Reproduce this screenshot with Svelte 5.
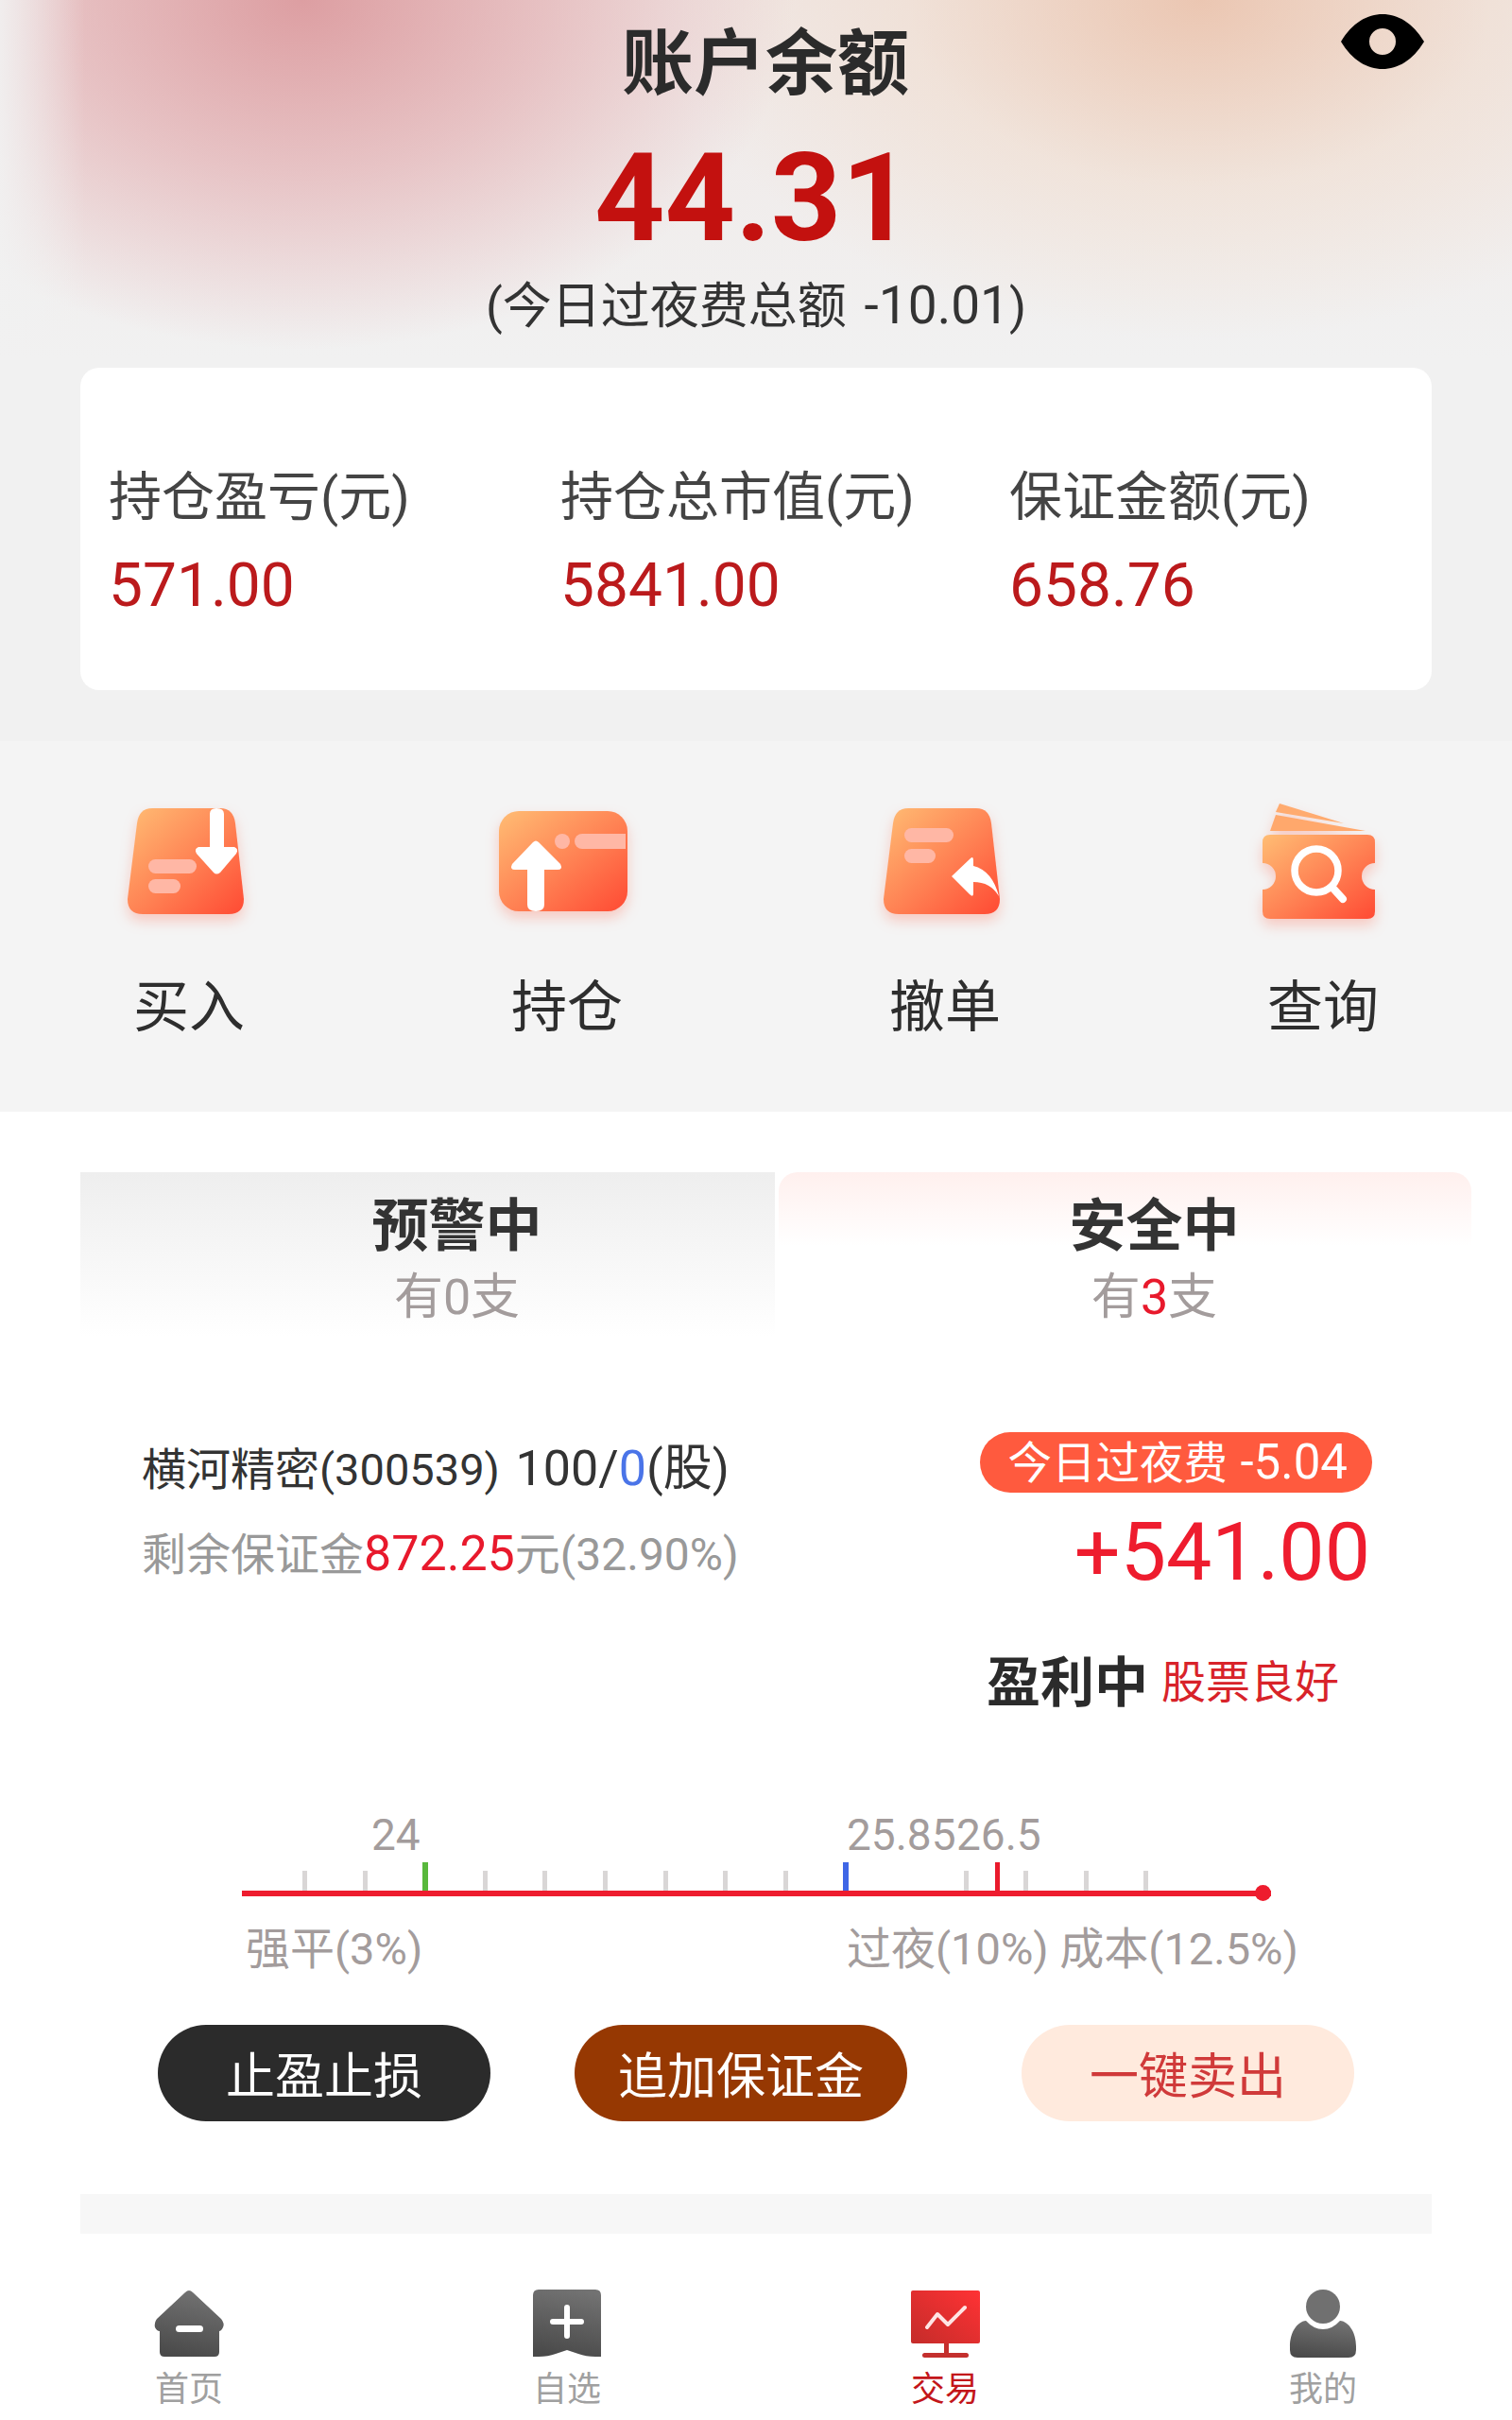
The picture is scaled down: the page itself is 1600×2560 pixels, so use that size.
<script>
  const ticks = Array.from({ length: 15 }, (_, i) => 64 + i * 63.6).filter((_, i) => i !== 2 && i !== 10);
  const marks = [
    { left: 191, cls: 'green' },
    { left: 636, cls: 'blue' },
    { left: 797, cls: 'red' },
  ];
  const stats = [
    { label: '持仓盈亏(元)', value: '571.00' },
    { label: '持仓总市值(元)', value: '5841.00' },
    { label: '保证金额(元)', value: '658.76' },
  ];
</script>

<div class="page">
  <header class="head">
    <svg class="eye" viewBox="0 0 88 58" width="88" height="58">
      <path fill-rule="evenodd" fill="#000" d="M0 29C12 9 28 0 44 0s32 9 44 29C76 49 60 58 44 58S12 49 0 29ZM44 15a14 14 0 1 0 0 28a14 14 0 1 0 0-28Z" />
    </svg>
    <div class="title">账户余额</div>
    <div class="amount">44.31</div>
    <div class="sub">(今日过夜费总额 <span>-10.01</span>)</div>
    <div class="card">
      {#each stats as s}
        <div>
          <div class="stat-label">{s.label}</div>
          <div class="stat-value">{s.value}</div>
        </div>
      {/each}
    </div>
  </header>

  <section class="actions">
    <svg width="0" height="0" class="defs">
      <defs>
        <linearGradient id="org" x1="0" y1="0" x2="1" y2="1">
          <stop offset="0" stop-color="#ffbd74" />
          <stop offset="0.55" stop-color="#ff7f52" />
          <stop offset="1" stop-color="#ff4a33" />
        </linearGradient>
        <linearGradient id="gray" x1="0.6" y1="0" x2="0.4" y2="1">
          <stop offset="0" stop-color="#727272" />
          <stop offset="1" stop-color="#4a4a4a" />
        </linearGradient>
        <linearGradient id="redg" x1="1" y1="0" x2="0" y2="1">
          <stop offset="0" stop-color="#ff3234" />
          <stop offset="1" stop-color="#c42c2a" />
        </linearGradient>
      </defs>
    </svg>
    <div class="action">
      <svg class="aicon" viewBox="0 0 160 150" width="160" height="150">
        <path fill="url(#org)" d="M41 10H113Q127 10 129 26L138 106Q138 122 122 122H31Q15 122 15 106L25 26Q27 10 41 10Z" />
        <rect x="37" y="64" width="51" height="15" rx="7.5" fill="#ffb7a5" />
        <rect x="37" y="85" width="34" height="15" rx="7.5" fill="#ffb7a5" />
        <path fill="#fff" d="M102 16Q102 10 109 10Q117 10 117 16V51H128Q133 53 130 58L113 78Q109 81 106 78L88 58Q85 53 90 51H102Z" />
      </svg>
      <span>买入</span>
    </div>
    <div class="action">
      <svg class="aicon" viewBox="0 0 160 150" width="160" height="150">
        <rect x="8" y="13" width="136" height="106" rx="21" fill="url(#org)" />
        <circle cx="75" cy="45" r="8" fill="#ffb7a5" />
        <path fill="#ffb7a5" d="M96 37H142V53H96a8 8 0 0 1 0-16Z" />
        <path fill="#fff" d="M44 46Q47 43 50 46L73 69Q76 75 70 75H56V112Q56 119 47 119Q38 119 38 112V75H25Q19 75 22 69Z" />
      </svg>
      <span>持仓</span>
    </div>
    <div class="action">
      <svg class="aicon" viewBox="0 0 160 150" width="160" height="150">
        <path fill="url(#org)" d="M41 10H113Q127 10 129 26L138 106Q138 122 122 122H31Q15 122 15 106L25 26Q27 10 41 10Z" />
        <rect x="37" y="31" width="52" height="15" rx="7.5" fill="#ffb7a5" />
        <rect x="37" y="53" width="33" height="15" rx="7.5" fill="#ffb7a5" />
        <path fill="#fff" d="M87 82L107 63Q110 60 110 65V71Q130 76 137 103Q128 88 110 88V100Q110 105 106 101Z" />
      </svg>
      <span>撤单</span>
    </div>
    <div class="action">
      <svg class="aicon" viewBox="0 0 160 150" width="160" height="150">
        <path fill="#ffab6f" d="M34 5L102 26L30 14Z" />
        <path fill="#ffa86c" d="M30 17L125 34H24Z" />
        <path fill="url(#org)" fill-rule="evenodd" d="M24 38H127Q135 38 135 46V68A14 14 0 0 0 135 96V119Q135 127 127 127H24Q16 127 16 119V96A14 14 0 0 0 16 68V46Q16 38 24 38Z" />
        <circle cx="73" cy="76" r="23" fill="none" stroke="#fff" stroke-width="7.5" />
        <path d="M91 95L101 106" stroke="#fff" stroke-width="8" stroke-linecap="round" />
      </svg>
      <span>查询</span>
    </div>
  </section>

  <main class="main">
    <div class="tabs">
      <div class="tab warn">
        <div class="tab-title">预警中</div>
        <div class="tab-sub">有0支</div>
      </div>
      <div class="tab safe">
        <div class="tab-title">安全中</div>
        <div class="tab-sub">有<em>3</em>支</div>
      </div>
    </div>

    <div class="pos">
      <div>
        <div class="pos-name">横河精密(300539) <span>100/<b>0</b>(股)</span></div>
        <div class="pos-margin">剩余保证金<em>872.25</em><span>元(32.90%)</span></div>
      </div>
      <div class="pos-right">
        <div class="pill">今日过夜费 <span>-5.04</span></div>
        <div class="profit">+541.00</div>
      </div>
    </div>

    <div class="status">
      <strong>盈利中</strong>
      <span>股票良好</span>
    </div>

    <div class="scale">
      <span class="val" style="left: 137px">24</span>
      <span class="val" style="left: 640px">25.85</span>
      <span class="val" style="left: 756px">26.5</span>
      {#each ticks as t}
        <i class="tick" style="left: {t}px"></i>
      {/each}
      {#each marks as m}
        <i class="mark {m.cls}" style="left: {m.left}px"></i>
      {/each}
      <div class="line"></div>
      <div class="dot"></div>
    </div>

    <div class="scale-labels">
      <span>强平(3%)</span>
      <span>过夜(10%) 成本(12.5%)</span>
    </div>

    <div class="btns">
      <button class="btn dark">止盈止损</button>
      <button class="btn brown">追加保证金</button>
      <button class="btn light">一键卖出</button>
    </div>

    <div class="bar"></div>
  </main>

  <nav class="nav">
    <div class="nav-item">
      <svg viewBox="0 0 80 76" width="80" height="76">
        <path fill="url(#gray)" d="M36 5Q40 1 44 5L74 33Q78 38 76 42Q74 46 72 46V68Q72 73 67 73H14Q9 73 9 68V46Q6 46 4 42Q3 37 6 33Z" />
        <rect x="26" y="40" width="29" height="7" rx="3.5" fill="#fff" />
      </svg>
      <span>首页</span>
    </div>
    <div class="nav-item">
      <svg viewBox="0 0 80 76" width="80" height="76">
        <path fill="url(#gray)" d="M10 2H70Q76 2 76 8V73H70Q60 73 52 70L40 66L28 70Q20 73 10 73H4V8Q4 2 10 2Z" />
        <path d="M25 36H55M40 21V51" stroke="#fff" stroke-width="6" stroke-linecap="round" />
      </svg>
      <span>自选</span>
    </div>
    <div class="nav-item on">
      <svg viewBox="0 0 80 76" width="80" height="76">
        <rect x="4" y="3" width="73" height="56" rx="2" fill="url(#redg)" />
        <rect x="39" y="59" width="5" height="11" fill="#c4302e" />
        <rect x="16" y="69" width="49" height="5" rx="2.5" fill="#c4302e" />
        <path d="M21 42L32 28L43 39L61 21" fill="none" stroke="#ffe4e4" stroke-width="4" stroke-linecap="round" stroke-linejoin="round" />
      </svg>
      <span>交易</span>
    </div>
    <div class="nav-item">
      <svg viewBox="0 0 80 76" width="80" height="76">
        <ellipse cx="40" cy="20" rx="18" ry="18" fill="#707070" />
        <path fill="url(#gray)" d="M5 62C5 48 12 36 22 35Q30 44 40 44Q50 44 58 35C68 36 75 48 75 62V66Q75 74 67 74H13Q5 74 5 66Z" />
      </svg>
      <span>我的</span>
    </div>
  </nav>
</div>

<style>
  :global(body) {
    margin: 0;
    background: #fff;
  }

  .page {
    width: 1600px;
    height: 2560px;
    overflow: hidden;
    font-family: Roboto, "Noto Sans CJK SC", sans-serif;
    color: #333;
  }

  .defs {
    position: absolute;
  }

  .head {
    position: relative;
    height: 784px;
    box-sizing: border-box;
    padding-top: 26px;
    text-align: center;
    background:
      linear-gradient(90deg, rgba(241, 241, 241, 0.9) 0, rgba(241, 241, 241, 0) 90px),
      radial-gradient(ellipse 520px 370px at 320px 0, rgba(216, 140, 145, 0.8) 0%, rgba(222, 155, 160, 0.5) 50%, rgba(228, 180, 185, 0) 100%),
      radial-gradient(ellipse 560px 360px at 1270px 0, rgba(234, 190, 165, 0.8) 0%, rgba(240, 215, 195, 0.4) 55%, rgba(240, 225, 205, 0) 100%),
      linear-gradient(#f0e8e6 0, #f1f1f1 380px);
  }

  .eye {
    position: absolute;
    top: 15px;
    left: 1419px;
  }

  .title {
    font-size: 76px;
    line-height: 84px;
    font-weight: 700;
    padding-left: 20px;
    color: #2b2b2b;
  }

  .amount {
    margin-top: 35px;
    font-size: 130px;
    line-height: 130px;
    font-weight: 700;
    color: #c3110f;
    padding-right: 6px;
  }

  .sub {
    margin-top: 13px;
    height: 70px;
    font-size: 52px;
    line-height: 70px;
    color: #333;
  }

  .sub span {
    margin-left: 6px;
    font-size: 55px;
  }

  .card {
    margin: 31px 85px 0;
    height: 341px;
    box-sizing: border-box;
    padding: 102px 0 0 30px;
    background: #fff;
    border-radius: 20px;
    display: grid;
    grid-template-columns: 478px 475px 1fr;
    text-align: left;
  }

  .stat-label {
    font-size: 56px;
    line-height: 70px;
    color: #444;
  }

  .stat-value {
    margin-top: 24px;
    font-size: 64px;
    line-height: 70px;
    color: #bb1a1c;
  }

  .actions {
    height: 392px;
    box-sizing: border-box;
    padding-top: 61px;
    background: #f4f4f4;
    display: grid;
    grid-template-columns: repeat(4, 400px);
  }

  .action {
    display: flex;
    flex-direction: column;
    align-items: center;
  }

  .aicon {
    filter: drop-shadow(0 7px 7px rgba(255, 90, 60, 0.28));
  }

  .action span {
    margin-top: 36px;
    font-size: 59px;
    line-height: 70px;
    color: #2e2e2e;
  }

  .main {
    background: #fff;
  }

  .tabs {
    padding: 64px 43px 0 85px;
    display: grid;
    grid-template-columns: 735px 733px;
    gap: 4px;
  }

  .tab {
    height: 174px;
    box-sizing: border-box;
    padding: 23px 0 0 62px;
    text-align: center;
  }

  .warn {
    background: linear-gradient(#eeeeee, #ffffff);
  }

  .safe {
    background: linear-gradient(#fff0ee, #ffffff 45%);
    border-radius: 20px 20px 0 0;
  }

  .tab-title {
    font-size: 60px;
    line-height: 70px;
    font-weight: 700;
    color: #333;
  }

  .tab-sub {
    margin-top: 10px;
    font-size: 52px;
    line-height: 60px;
    color: #a39c9c;
  }

  .tab-sub em {
    font-style: normal;
    color: #e8192c;
  }

  .pos {
    margin-top: 101px;
    padding: 0 148px 0 150px;
    display: flex;
    justify-content: space-between;
  }

  .pos-name {
    padding-top: 1px;
    height: 76px;
    font-size: 47px;
    line-height: 76px;
    color: #333;
  }

  .pos-name span {
    margin-left: 5px;
    font-size: 52px;
  }

  .pos-name b {
    font-weight: 400;
    color: #4a74e8;
  }

  .pos-margin {
    margin-top: 17px;
    height: 70px;
    font-size: 47px;
    line-height: 70px;
    color: #999;
  }

  .pos-margin em {
    font-style: normal;
    font-size: 52px;
    color: #e8192c;
  }

  .pos-margin span {
    font-size: 48px;
  }

  .pos-right {
    display: flex;
    flex-direction: column;
    align-items: flex-end;
  }

  .pill {
    height: 64px;
    line-height: 64px;
    padding: 0 26px 0 29px;
    border-radius: 32px;
    background: #ff5a3e;
    color: #fff;
    font-size: 46.5px;
  }

  .pill span {
    margin-left: 2px;
    font-size: 51px;
  }

  .profit {
    margin: 13px 2px 0 0;
    font-size: 86px;
    line-height: 100px;
    color: #ee1c2e;
  }

  .status {
    margin-top: 48px;
    padding-right: 183px;
    display: flex;
    justify-content: flex-end;
    align-items: center;
    gap: 14px;
    height: 70px;
  }

  .status strong {
    font-size: 57px;
    color: #2b2b2b;
  }

  .status span {
    font-size: 47px;
    color: #d8232a;
  }

  .scale {
    position: relative;
    margin: 90px 0 0 256px;
    width: 1089px;
    height: 127px;
  }

  .val {
    position: absolute;
    top: 6px;
    font-size: 46px;
    line-height: 70px;
    color: #a39c9c;
  }

  .tick {
    position: absolute;
    top: 79px;
    width: 5px;
    height: 21px;
    background: #d9d6d6;
  }

  .mark {
    position: absolute;
    top: 70px;
    width: 6px;
    height: 30px;
  }

  .green { background: #58b83c; }
  .blue { background: #3f66e6; }
  .red { background: #ea1a2c; width: 5px; }

  .line {
    position: absolute;
    top: 100px;
    left: 0;
    right: 0;
    height: 6px;
    background: #ee1c2e;
  }

  .dot {
    position: absolute;
    top: 94px;
    right: 0;
    width: 17px;
    height: 17px;
    border-radius: 50%;
    background: #ee1c2e;
  }

  .scale-labels {
    padding-left: 260px;
    display: grid;
    grid-template-columns: 636px 1fr;
    font-size: 47px;
    line-height: 70px;
    color: #a39c9c;
  }

  .btns {
    margin-top: 45px;
    padding-left: 167px;
    display: grid;
    grid-template-columns: 441px 473px 352px;
  }

  .btn {
    width: 352px;
    height: 102px;
    padding: 0 0 2px;
    border: 0;
    border-radius: 51px;
    font-family: inherit;
    font-size: 52px;
  }

  .dark { background: #2b2b2b; color: #fff; }
  .brown { background: #963802; color: #fff; }
  .light { background: #ffeadd; color: #d03a3a; }

  .bar {
    margin: 77px 85px 0;
    height: 42px;
    background: #f7f7f7;
  }

  .nav {
    padding-top: 57px;
    display: grid;
    grid-template-columns: repeat(4, 400px);
  }

  .nav-item {
    display: flex;
    flex-direction: column;
    align-items: center;
  }

  .nav-item span {
    margin-top: 10px;
    font-size: 36px;
    line-height: 44px;
    color: #a0a0a0;
  }

  .nav-item.on span {
    color: #c3161a;
  }
</style>
